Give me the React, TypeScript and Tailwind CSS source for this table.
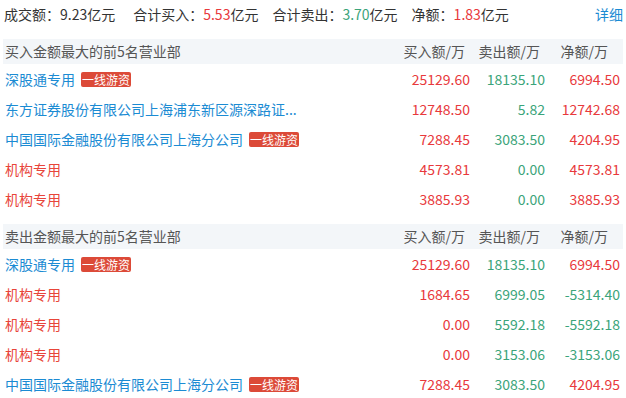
import React from "react";

type Row = {
  name: string;
  tag?: boolean;
  kind: "link" | "inst";
  buy: string;
  sell: string;
  net: string;
};

const buyRows: Row[] = [
  { name: "深股通专用", tag: true, kind: "link", buy: "25129.60", sell: "18135.10", net: "6994.50" },
  { name: "东方证券股份有限公司上海浦东新区源深路证...", kind: "link", buy: "12748.50", sell: "5.82", net: "12742.68" },
  { name: "中国国际金融股份有限公司上海分公司", tag: true, kind: "link", buy: "7288.45", sell: "3083.50", net: "4204.95" },
  { name: "机构专用", kind: "inst", buy: "4573.81", sell: "0.00", net: "4573.81" },
  { name: "机构专用", kind: "inst", buy: "3885.93", sell: "0.00", net: "3885.93" },
];

const sellRows: Row[] = [
  { name: "深股通专用", tag: true, kind: "link", buy: "25129.60", sell: "18135.10", net: "6994.50" },
  { name: "机构专用", kind: "inst", buy: "1684.65", sell: "6999.05", net: "-5314.40" },
  { name: "机构专用", kind: "inst", buy: "0.00", sell: "5592.18", net: "-5592.18" },
  { name: "机构专用", kind: "inst", buy: "0.00", sell: "3153.06", net: "-3153.06" },
  { name: "中国国际金融股份有限公司上海分公司", tag: true, kind: "link", buy: "7288.45", sell: "3083.50", net: "4204.95" },
];

const Section = ({ title, rows }: { title: string; rows: Row[] }) => (
  <div>
    <div className="flex items-center h-[25px] bg-[#f3f6f9] text-[#555] pr-[3px]">
      <div className="flex-1 pl-[2px]">{title}</div>
      <div className="w-[75px] text-right pr-[5px]">买入额/万</div>
      <div className="w-[75px] text-right pr-[5px]">卖出额/万</div>
      <div className="w-[75px] text-right pr-[12px]">净额/万</div>
    </div>
    {rows.map((r, i) => (
      <div key={i} className="flex items-center h-[30px] pr-[3px]">
        <div className="flex-1 flex items-center pl-[2px] whitespace-nowrap overflow-hidden">
          <span className={r.kind === "link" ? "text-[#1b8bd3]" : "text-[#e8453a]"}>{r.name}</span>
          {r.tag && (
            <span className="ml-[6px] bg-[#dc4a38] text-white text-[12px] leading-[15px] px-[1px] rounded-[2px]">
              一线游资
            </span>
          )}
        </div>
        <div className="w-[75px] text-right text-[#e8393c]">{r.buy}</div>
        <div className="w-[75px] text-right text-[#3ba47a]">{r.sell}</div>
        <div className={"w-[75px] text-right " + (r.net.startsWith("-") ? "text-[#3ba47a]" : "text-[#e8393c]")}>
          {r.net}
        </div>
      </div>
    ))}
  </div>
);

export default function App() {
  return (
    <div
      className="w-[626px] h-[398px] overflow-hidden bg-white px-[3px] text-[14px] text-[#333]"
      style={{ fontFamily: '"Noto Sans CJK SC", "Noto Sans", sans-serif' }}
    >
      <div className="flex items-center h-[28px] pl-[1px]">
        <span className="mr-[18px]">成交额：9.23亿元</span>
        <span className="mr-[14px]">
          合计买入：<span className="text-[#e8393c]">5.53</span>亿元
        </span>
        <span className="mr-[14px]">
          合计卖出：<span className="text-[#3ba47a]">3.70</span>亿元
        </span>
        <span>
          净额：<span className="text-[#e8393c]">1.83</span>亿元
        </span>
        <span className="ml-auto text-[#1b8bd3]">详细</span>
      </div>
      <div className="mt-[11px]">
        <Section title="买入金额最大的前5名营业部" rows={buyRows} />
      </div>
      <div className="mt-[10px]">
        <Section title="卖出金额最大的前5名营业部" rows={sellRows} />
      </div>
    </div>
  );
}
